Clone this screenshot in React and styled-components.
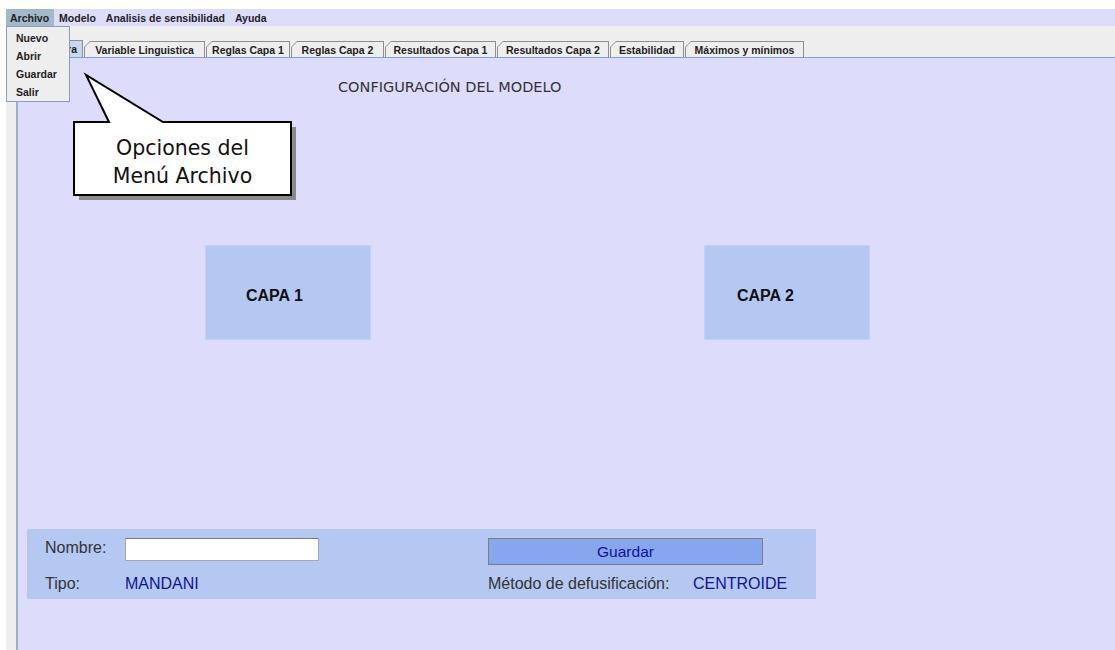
import React from "react";
import styled, { createGlobalStyle } from "styled-components";

// colours taken from the Metal look of the original window
const LAVENDER = "#dedcfb";
const GREY = "#eeeeee";
const SOFT_BLUE = "#b5c8f2";
const INK = "#11119c";

const GlobalStyle = createGlobalStyle`
    html, body {
        margin: 0;
        padding: 0;
        background: white;
    }
    * {
        box-sizing: border-box;
    }
`;

const Page = styled.div`
    height: 100vh;
    padding: 9px 0 0 6px;
    overflow: hidden;
    font-family: "Liberation Sans", Arial, sans-serif;
`;

const Window = styled.div`
    position: relative;
    height: 100%;
    display: flex;
    flex-direction: column;
`;

const MenuBar = styled.div`
    height: 17px;
    background: ${LAVENDER};
    display: flex;
    align-items: stretch;
`;

const MenuItem = styled.div`
    padding: 0 5px 0 4px;
    margin-right: 1px;
    display: flex;
    align-items: center;
    font-size: 10.5px;
    font-weight: bold;
    color: #222;
    background: ${(p) => (p.$open ? "#a3b8cc" : "transparent")};
`;

const PopupMenu = styled.div`
    position: absolute;
    top: 17px;
    left: 0;
    width: 64px;
    height: 76px;
    padding: 2px 0;
    background: ${GREY};
    border: 1px solid #8a9cb8;
    z-index: 5;
`;

const PopupItem = styled.div`
    height: 18px;
    padding-left: 9px;
    display: flex;
    align-items: center;
    font-size: 10.5px;
    font-weight: bold;
    color: #222;
`;

const Body = styled.div`
    flex: 1;
    display: flex;
    flex-direction: column;
    background: ${GREY};
    padding-left: 10px;
`;

const TabStrip = styled.div`
    height: 31px;
    display: flex;
    align-items: flex-end;
    padding-left: 1px;
`;

const Tab = styled.div`
    width: ${(p) => p.$w}px;
    height: ${(p) => (p.$active ? "17px" : "16px")};
    margin-right: 1px;
    padding: 1px 1px 0 1px;
    background: #8e8e8e;
    clip-path: polygon(6px 0, 100% 0, 100% 100%, 0 100%, 0 6px);
    display: flex;
`;

const TabFace = styled.div`
    flex: 1;
    display: flex;
    align-items: center;
    justify-content: ${(p) => (p.$active ? "flex-end" : "center")};
    padding-right: ${(p) => (p.$active ? "5px" : "0")};
    background: ${(p) => (p.$active ? "#c6d8f0" : GREY)};
    clip-path: polygon(5px 0, 100% 0, 100% 100%, 0 100%, 0 5px);
    font-size: 10.5px;
    font-weight: bold;
    color: #222;
    white-space: nowrap;
    overflow: hidden;
`;

const Panel = styled.div`
    position: relative;
    flex: 1;
    background: ${LAVENDER};
    border-top: 1px solid #7e9ed8;
    border-left: 2px solid #98afd8;
    display: flex;
    flex-direction: column;
`;

const Title = styled.div`
    margin: 21px 0 0 320px;
    font-family: "DejaVu Sans", Verdana, sans-serif;
    font-size: 14.5px;
    color: #333;
`;

const LayerRow = styled.div`
    margin: 150px 0 0 187px;
    display: flex;
    gap: 333px;
`;

const LayerBox = styled.div`
    width: 166px;
    height: 95px;
    background: ${SOFT_BLUE};
    border: 1px solid #c3d2f4;
    display: flex;
    align-items: center;
    padding: 6px 0 0 ${(p) => p.$indent}px;
    font-size: 16px;
    font-weight: bold;
    color: #111;
`;

const FormPanel = styled.div`
    margin: 189px 0 0 9px;
    width: 789px;
    height: 70px;
    background: ${SOFT_BLUE};
    padding: 9px 0 0 18px;
    display: grid;
    grid-template-columns: 80px 363px 205px auto;
    grid-template-rows: 27px 22px;
    row-gap: 8px;
    font-size: 16px;
`;

const Label = styled.div`
    display: flex;
    align-items: ${(p) => (p.$top ? "flex-start" : "center")};
    padding-top: ${(p) => (p.$top ? "1px" : "0")};
    color: #333;
`;

const Value = styled.div`
    display: flex;
    align-items: center;
    color: ${INK};
`;

const TextField = styled.input`
    width: 194px;
    height: 23px;
    background: white;
    border: 1px solid #a6a6b4;
    border-top-color: #7a7a88;
    outline: none;
`;

const SaveButton = styled.button`
    grid-column: 3 / 5;
    width: 275px;
    height: 27px;
    background: #87a6ec;
    border: 1px solid #7c7c8c;
    font-family: inherit;
    font-size: 15.5px;
    color: ${INK};
    padding: 0;
`;

// speech bubble lies over the panel, pointing at the open menu
const Callout = styled.div`
    position: absolute;
    left: 52px;
    top: 12px;
    width: 232px;
    height: 134px;
    z-index: 3;
`;

const CalloutText = styled.div`
    position: absolute;
    left: 4px;
    top: 64px;
    width: 217px;
    text-align: center;
    font-family: "DejaVu Sans", Verdana, sans-serif;
    font-size: 20.5px;
    line-height: 28px;
    color: #111;
`;

const tabs = [
    { label: "Estructura", w: 66, active: true },
    { label: "Variable Linguistica", w: 121 },
    { label: "Reglas Capa 1", w: 84 },
    { label: "Reglas Capa 2", w: 93 },
    { label: "Resultados Capa 1", w: 111 },
    { label: "Resultados Capa 2", w: 112 },
    { label: "Estabilidad", w: 74 },
    { label: "Máximos y mínimos", w: 119 },
];

const CalloutShape = () => (
    <svg width="232" height="134" viewBox="0 0 232 134">
        <rect x="9" y="57" width="217" height="73" fill="#8a8a8a" />
        <path
            d="M39 52 L16 5 L93 52 L221 52 L221 125 L4 125 L4 52 Z"
            fill="white"
            stroke="#000"
            strokeWidth="2"
        />
    </svg>
);

const App = () => {
    return (
        <>
            <GlobalStyle />
            <Page>
                <Window>
                    <MenuBar>
                        <MenuItem $open>Archivo</MenuItem>
                        <MenuItem>Modelo</MenuItem>
                        <MenuItem>Analisis de sensibilidad</MenuItem>
                        <MenuItem>Ayuda</MenuItem>
                    </MenuBar>
                    <PopupMenu>
                        <PopupItem>Nuevo</PopupItem>
                        <PopupItem>Abrir</PopupItem>
                        <PopupItem>Guardar</PopupItem>
                        <PopupItem>Salir</PopupItem>
                    </PopupMenu>
                    <Body>
                        <TabStrip>
                            {tabs.map((t) => (
                                <Tab key={t.label} $active={t.active} $w={t.w}>
                                    <TabFace $active={t.active}>{t.label}</TabFace>
                                </Tab>
                            ))}
                        </TabStrip>
                        <Panel>
                            <Callout>
                                <CalloutShape />
                                <CalloutText>
                                    Opciones del
                                    <br />
                                    Menú Archivo
                                </CalloutText>
                            </Callout>
                            <Title>CONFIGURACIÓN DEL MODELO</Title>
                            <LayerRow>
                                <LayerBox $indent={40}>CAPA 1</LayerBox>
                                <LayerBox $indent={32}>CAPA 2</LayerBox>
                            </LayerRow>
                            <FormPanel>
                                <Label $top>Nombre:</Label>
                                <div>
                                    <TextField />
                                </div>
                                <SaveButton>Guardar</SaveButton>
                                <Label>Tipo:</Label>
                                <Value>MANDANI</Value>
                                <Label>Método de defusificación:</Label>
                                <Value>CENTROIDE</Value>
                            </FormPanel>
                        </Panel>
                    </Body>
                </Window>
            </Page>
        </>
    );
};

export default App;
